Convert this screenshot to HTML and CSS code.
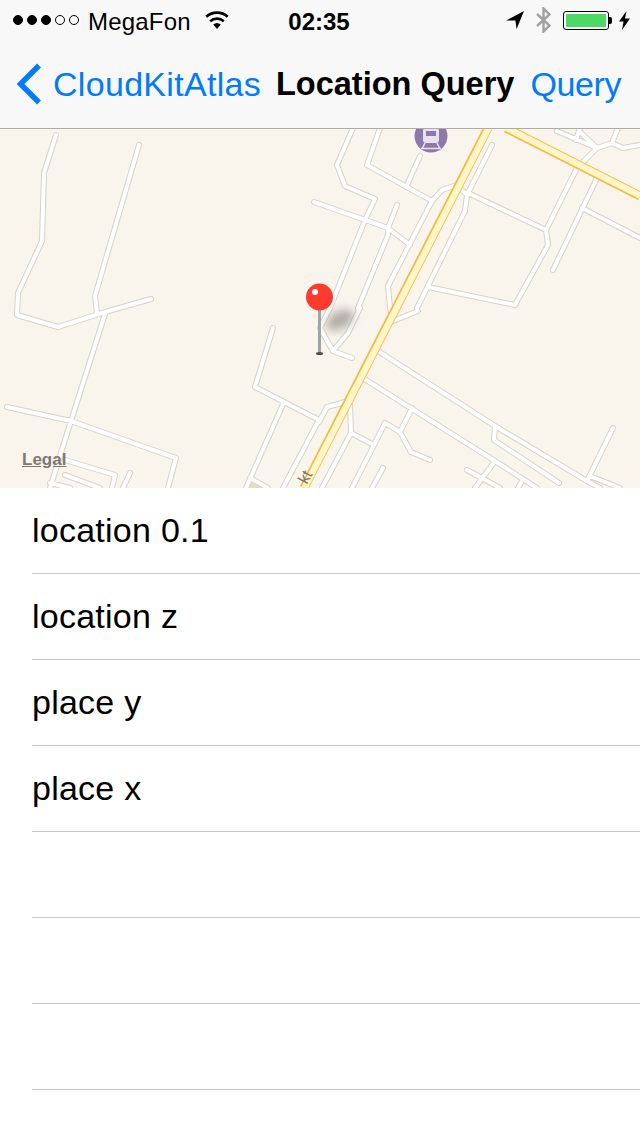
FILE: index.html
```html
<!DOCTYPE html>
<html lang="en">
<head>
    <meta charset="UTF-8">
    <meta name="viewport" content="width=device-width, initial-scale=1.0">
    <title>Location Query</title>
    <link rel="stylesheet" href="styles.css">
</head>
<body>
    <header class="top-bar">
        <div class="status-bar">
            <div class="status-left">
                <span class="signal">
                    <i class="dot on"></i><i class="dot on"></i><i class="dot on"></i><i class="dot"></i><i class="dot"></i>
                </span>
                <span class="carrier">MegaFon</span>
                <svg class="wifi" width="24" height="18" viewBox="0 0 24 18">
                    <path d="M12 18 L8.2 13.6 A6 6 0 0 1 15.8 13.6 Z" fill="#000"/>
                    <path d="M5.2 10.2 A10.4 10.4 0 0 1 18.8 10.2" fill="none" stroke="#000" stroke-width="2.6"/>
                    <path d="M1.3 5.8 A16 16 0 0 1 22.7 5.8" fill="none" stroke="#000" stroke-width="2.8"/>
                </svg>
            </div>
            <div class="time">02:35</div>
            <div class="status-right">
                <svg class="arrow" width="18" height="18" viewBox="0 0 18 18">
                    <path d="M0 9.5 L18 0 L10.6 18 L9.4 9.6 Z" fill="#000"/>
                </svg>
                <svg class="bluetooth" width="15" height="26" viewBox="0 0 15 26">
                    <path d="M1 7 L13.5 18.5 L7.5 24.5 V1.5 L13.5 7.5 L1 19" fill="none" stroke="#a2a2a2" stroke-width="2.4"/>
                </svg>
                <span class="battery"><span class="battery-fill"></span></span>
                <span class="battery-tip"></span>
                <svg class="bolt" width="11" height="19" viewBox="0 0 11 19">
                    <path d="M7.5 0 L0 10.5 H4.6 L3 19 L11 7.6 H6 Z" fill="#000"/>
                </svg>
            </div>
        </div>
        <nav class="nav-bar">
            <a class="back">
                <svg width="26" height="42" viewBox="0 0 26 42">
                    <path d="M23 2.500 L4.500 21 L23 39.500" fill="none" stroke="#007aff" stroke-width="5.400"/>
                </svg>
                <span>CloudKitAtlas</span>
            </a>
            <h1 class="title">Location Query</h1>
            <a class="action">Query</a>
        </nav>
    </header>

    <section class="map">
        <svg class="map-art" width="640" height="360" viewBox="0 128 640 360">
            <defs>
                <path id="streets" d="M56 135 L44 173 L42 241 L18 293 L17 315 L58 327 L105 312 L151 299
                    M139 145 L95 296 L97 313
                    M105 314 L71 421 L50 488
                    M7 407 L71 421 L176 458 L168 488
                    M65 460 L115 475 L112 488 M65 475 L100 488 M50 483 L70 488 M130 473 L123 488
                    M273 328 L255 387 L319 420
                    M284 402 L246 488 M319 420 L283 488 M250 478 L268 488
                    M319 422 L327 407 L345 402
                    M350 405 L351 433 L322 488
                    M351 433 L374 445 L352 488
                    M374 445 L385 423 L400 432 L411 452 L430 460
                    M400 432 L412 408
                    M378 351 L495 426 L587 481 L600 488
                    M495 426 L494 440 L559 483
                    M363 378 L495 461 L537 488
                    M495 461 L475 488 M467 470 L500 488 M522 481 L518 488
                    M613 428 L587 481 M590 476 L620 488
                    M383 468 L372 488
                    M353 128 L337 165 L345 186 L375 199 L365 220 L330 308 L320 328 L333 351 L352 358
                    M360 308 L348 333 L333 351
                    M380 128 L367 165 L432 201
                    M420 156 L407 185
                    M432 201 L442 190 L457 185
                    M432 201 L388 286 L390 308 L393 321 L418 311
                    M314 202 L388 228 L410 245
                    M397 205 L388 228 L388 235 L358 308
                    M492 145 L468 193
                    M460 188 L467 195 L465 211 L417 308
                    M468 193 L546 230 L548 245 L515 305
                    M428 287 L515 305
                    M546 230 L577 168 L597 148 L612 143 L623 148 L640 145
                    M597 178 L553 270
                    M582 208 L640 238
                    M557 131 L597 148 M580 128 L576 140 M581 133 L597 148 M612 143 L618 128"/>
            </defs>
            <polygon class="block" points="250,482 264,488 246,488"/>
            <use class="street-edge" href="#streets"/>
            <use class="street-fill" href="#streets"/>
            <g class="highway">
                <path class="hw-edge" d="M488 128 L304 488 M506 128 L640 196"/>
                <path class="hw-fill" d="M488.500 128 L304.500 488 M506 127.700 L640 195.700"/>
            </g>
            <text class="road-label" transform="translate(307 485) rotate(-62)">kt</text>
            <circle class="station-ring" cx="431" cy="136" r="18"/>
            <circle class="station" cx="431" cy="136" r="16.500"/>
            <g class="train">
                <rect x="423" y="128" width="16" height="15" rx="3"/>
                <rect class="train-window" x="426" y="131" width="10" height="5"/>
                <path class="train-legs" d="M425 143 L422 149 M437 143 L440 149 M421 148.500 H441"/>
            </g>
            <ellipse class="pin-shadow" cx="340" cy="320" rx="15" ry="9" transform="rotate(-30 340 320)"/>
            <rect class="needle" x="318" y="308" width="3" height="45"/>
            <ellipse class="needle-base" cx="319.500" cy="353.500" rx="3.500" ry="1.500"/>
            <circle class="pin-head" cx="319.500" cy="297" r="13.500"/>
            <circle class="pin-shine" cx="315" cy="292" r="3"/>
        </svg>
        <span class="legal">Legal</span>
    </section>

    <ul class="rows">
        <li class="row">location 0.1</li>
        <li class="row">location z</li>
        <li class="row">place y</li>
        <li class="row">place x</li>
        <li class="row"></li>
        <li class="row"></li>
        <li class="row"></li>
    </ul>
</body>
</html>
```

FILE: styles.css
```css
* {
    box-sizing: border-box;
}
html, body {
    margin: 0;
    padding: 0;
}
body {
    width: 640px;
    height: 1136px;
    overflow: hidden;
    background-color: #fff;
    color: #000;
    font-family: 'Liberation Sans', Arial, sans-serif;
}

/* top bar */
.top-bar {
    height: 129px;
    background-color: #f8f8f8;
    border-bottom: 1px solid #b0aba3;
}
.status-bar {
    height: 40px;
    display: grid;
    grid-template-columns: 1fr auto 1fr;
    align-items: center;
    font-size: 24px;
    padding: 0 10px;
}
.status-left, .status-right {
    display: flex;
    align-items: center;
}
.status-right {
    justify-content: flex-end;
}
.signal {
    display: flex;
    gap: 4px;
    margin-left: 3px;
}
.dot {
    display: block;
    width: 10px;
    height: 10px;
    border: 1px solid #000;
    border-radius: 50%;
}
.dot.on {
    background-color: #000;
}
.carrier {
    margin-left: 9px;
    padding-top: 4px;
    letter-spacing: 0.2px;
}
.wifi {
    margin-left: 14px;
}
.time {
    margin-right: 2px;
    padding-top: 4px;
    font-weight: bold;
}
.bluetooth {
    margin-left: 12px;
}
.battery {
    width: 46px;
    height: 19px;
    margin-left: 12px;
    padding: 2px;
    border: 1px solid #000;
    border-radius: 3px;
    background-color: #fff;
}
.battery-fill {
    display: block;
    height: 100%;
    background-color: #4cd964;
    border-radius: 1px;
}
.battery-tip {
    width: 3px;
    height: 7px;
    background-color: #000;
    border-radius: 0 2px 2px 0;
}
.bolt {
    margin-left: 7px;
}
.nav-bar {
    height: 88px;
    display: flex;
    align-items: center;
    padding: 0 19px 0 16px;
    font-size: 34px;
}
.back {
    display: flex;
    align-items: center;
    gap: 11px;
    color: #007aff;
    letter-spacing: 0.3px;
}
.title {
    margin: 0 0 0 15px;
    font-size: 32.500px;
    font-weight: bold;
}
.action {
    margin-left: auto;
    color: #007aff;
    letter-spacing: -0.4px;
}

/* map */
.map {
    position: relative;
    height: 359px;
    overflow: hidden;
    background-color: #f9f5ed;
}
.map-art {
    display: block;
    margin-top: -1px;
}
.block {
    fill: #e6dcc4;
}
.street-edge, .street-fill {
    fill: none;
    stroke-linecap: round;
    stroke-linejoin: round;
}
.street-edge {
    stroke: #d8d2c8;
    stroke-width: 6;
}
.street-fill {
    stroke: #fff;
    stroke-width: 4;
}
.hw-edge, .hw-fill {
    fill: none;
}
.hw-edge {
    stroke: #f8b83c;
    stroke-width: 9;
}
.hw-fill {
    stroke: #fdf6c8;
    stroke-width: 6.500;
}
.road-label {
    font-size: 16px;
    fill: #77736c;
}
.station-ring {
    fill: #f9f5ed;
}
.station {
    fill: #8f78ac;
}
.train {
    fill: #e8e2f0;
}
.train-window {
    fill: #8f78ac;
}
.train-legs {
    fill: none;
    stroke: #e8e2f0;
    stroke-width: 1.5;
}
.pin-shadow {
    fill: #8a857e;
    opacity: 0.65;
    filter: blur(5px);
}
.needle {
    fill: #a2a2aa;
}
.needle-base {
    fill: #4a4a48;
}
.pin-head {
    fill: #ff3b30;
}
.pin-shine {
    fill: #fff;
}
.legal {
    position: absolute;
    left: 22px;
    top: 321px;
    font-size: 17px;
    font-weight: bold;
    color: #7d7873;
    text-decoration: underline;
}

/* list */
.rows {
    list-style: none;
    margin: 0;
    padding: 0 0 0 32px;
}
.row {
    height: 86px;
    line-height: 85px;
    font-size: 34px;
    letter-spacing: 0.25px;
    border-bottom: 1px solid #c8c7cc;
}
```
